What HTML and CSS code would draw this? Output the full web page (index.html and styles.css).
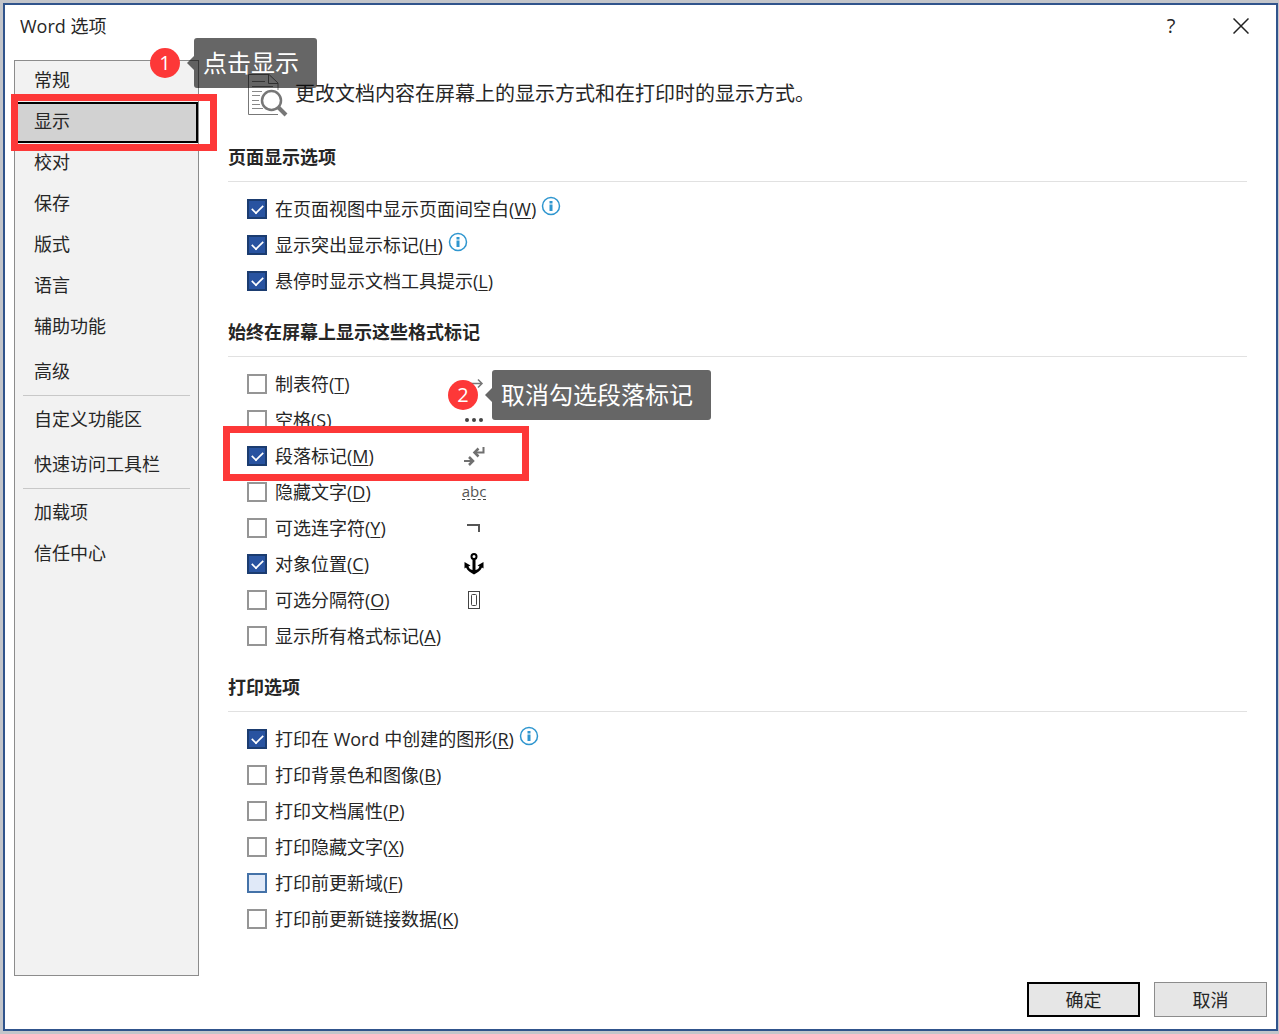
FILE: index.html
```html
<!doctype html>
<html lang="zh-CN">
<head>
    <meta charset="UTF-8">
    <title>Word 选项</title>
    <link rel="stylesheet" href="styles.css">
</head>
<body>
    <div class="dialog">
        <header class="titlebar">
            <h1>Word 选项</h1>
            <button type="button" class="help" aria-label="帮助">?</button>
            <button type="button" class="close" aria-label="关闭">
                <svg width="16" height="16" viewBox="0 0 16 16"><path d="M0.5 0.5L15.5 15.5M15.5 0.5L0.5 15.5"/></svg>
            </button>
        </header>

        <div class="main">
            <nav>
                <ul>
                    <li><a href="#">常规</a></li>
                    <li class="active">
                        <a href="#">显示</a>
                        <div class="mark mark-nav"></div>
                        <div class="callout callout-nav"><span class="badge">1</span><span class="tip">点击显示</span></div>
                    </li>
                    <li><a href="#">校对</a></li>
                    <li><a href="#">保存</a></li>
                    <li><a href="#">版式</a></li>
                    <li><a href="#">语言</a></li>
                    <li><a href="#">辅助功能</a></li>
                    <li class="spaced"><a href="#">高级</a></li>
                    <li class="group"><a href="#">自定义功能区</a></li>
                    <li class="spaced"><a href="#">快速访问工具栏</a></li>
                    <li class="group"><a href="#">加载项</a></li>
                    <li><a href="#">信任中心</a></li>
                </ul>
            </nav>

            <div class="content">
                <div class="intro">
                    <svg width="42" height="44" viewBox="0 0 42 44" fill="none">
                        <path d="M31 40.5H1.5V0.5H22L31 9V16M21.5 0.5V9.5H31" stroke="#777"/>
                        <path d="M5 7.5H18M5 12.5H26M5 17.5H15M5 21.5H13M5 26.5H12M5 30.5H13M5 34.5H16" stroke="#888"/>
                        <circle cx="24.500" cy="26.500" r="9.500" fill="#fff" stroke="#777" stroke-width="2.500"/>
                        <path d="M31 33L39 41" stroke="#777" stroke-width="4"/>
                    </svg>
                    <p>更改文档内容在屏幕上的显示方式和在打印时的显示方式。</p>
                </div>

                <section>
                    <h2>页面显示选项</h2>
                    <ul class="options">
                        <li>
                            <label><input type="checkbox" checked>在页面视图中显示页面间空白(<u>W</u>)</label>
                            <svg class="info" width="20" height="20" viewBox="0 0 20 20"><circle cx="10" cy="10" r="8.500"/><path d="M10 8.500V15M10 5V7.500"/></svg>
                        </li>
                        <li>
                            <label><input type="checkbox" checked>显示突出显示标记(<u>H</u>)</label>
                            <svg class="info" width="20" height="20" viewBox="0 0 20 20"><circle cx="10" cy="10" r="8.500"/><path d="M10 8.500V15M10 5V7.500"/></svg>
                        </li>
                        <li><label><input type="checkbox" checked>悬停时显示文档工具提示(<u>L</u>)</label></li>
                    </ul>
                </section>

                <section>
                    <h2>始终在屏幕上显示这些格式标记</h2>
                    <ul class="options marks">
                        <li>
                            <label><input type="checkbox">制表符(<u>T</u>)</label>
                            <svg width="26" height="24" viewBox="0 0 26 24" fill="none" stroke="#777" stroke-width="1.500"><path d="M4 11.500H21M17 7.500L21 11.500L17 15.500"/></svg>
                        </li>
                        <li>
                            <label><input type="checkbox">空格(<u>S</u>)</label>
                            <svg width="26" height="24" viewBox="0 0 26 24" fill="#444"><circle cx="6" cy="12" r="2"/><circle cx="13" cy="12" r="2"/><circle cx="20" cy="12" r="2"/></svg>
                        </li>
                        <li>
                            <label><input type="checkbox" checked>段落标记(<u>M</u>)</label>
                            <svg width="26" height="24" viewBox="0 0 26 24" fill="none" stroke="#707070" stroke-width="2"><path d="M3 17H12M22.500 3V8.500H13.500"/><path d="M8 13L12 17L8 21M17.500 4.500L13.500 8.500L17.500 12.500" stroke-width="2.500"/></svg>
                            <div class="mark mark-option"></div>
                            <div class="callout callout-option"><span class="badge">2</span><span class="tip">取消勾选段落标记</span></div>
                        </li>
                        <li>
                            <label><input type="checkbox">隐藏文字(<u>D</u>)</label>
                            <span class="abc">abc</span>
                        </li>
                        <li>
                            <label><input type="checkbox">可选连字符(<u>Y</u>)</label>
                            <svg width="26" height="24" viewBox="0 0 26 24" fill="none" stroke="#555" stroke-width="2"><path d="M6 9H18V16"/></svg>
                        </li>
                        <li>
                            <label><input type="checkbox" checked>对象位置(<u>C</u>)</label>
                            <svg width="26" height="24" viewBox="0 0 26 24">
                                <circle cx="13" cy="4.500" r="2.500" fill="none" stroke="#000" stroke-width="2"/>
                                <path d="M11.500 7H14.500V18C17 17.500 18 16 18.500 14.500L16.500 13.500L22.500 10V16.500L21 15.500C19.500 19 16.500 20.500 13 22.500C9.500 20.500 6.500 19 5 15.500L3.500 16.500V10L9.500 13.500L7.500 14.500C8 16 9 17.500 11.500 18Z"/>
                            </svg>
                        </li>
                        <li>
                            <label><input type="checkbox">可选分隔符(<u>O</u>)</label>
                            <svg width="26" height="24" viewBox="0 0 26 24" fill="none" stroke="#444"><rect x="7.500" y="3.500" width="11" height="17"/><rect x="10.500" y="6.500" width="5" height="11" rx="1"/></svg>
                        </li>
                        <li><label><input type="checkbox">显示所有格式标记(<u>A</u>)</label></li>
                    </ul>
                </section>

                <section>
                    <h2>打印选项</h2>
                    <ul class="options">
                        <li>
                            <label><input type="checkbox" checked>打印在 Word 中创建的图形(<u>R</u>)</label>
                            <svg class="info" width="20" height="20" viewBox="0 0 20 20"><circle cx="10" cy="10" r="8.500"/><path d="M10 8.500V15M10 5V7.500"/></svg>
                        </li>
                        <li><label><input type="checkbox">打印背景色和图像(<u>B</u>)</label></li>
                        <li><label><input type="checkbox">打印文档属性(<u>P</u>)</label></li>
                        <li><label><input type="checkbox">打印隐藏文字(<u>X</u>)</label></li>
                        <li><label><input type="checkbox" class="hover">打印前更新域(<u>F</u>)</label></li>
                        <li><label><input type="checkbox">打印前更新链接数据(<u>K</u>)</label></li>
                    </ul>
                </section>
            </div>
        </div>

        <footer>
            <button type="button" class="btn default">确定</button>
            <button type="button" class="btn">取消</button>
        </footer>
    </div>
</body>
</html>
```
FILE: styles.css
```css
* {
    box-sizing: border-box;
}

body {
    margin: 0;
    padding: 3px 1px 3px 3px;
    min-height: 100vh;
    display: flex;
    background-color: #c3c5ca;
    color: #262626;
    font-family: "Open Sans", "Noto Sans CJK SC", sans-serif;
    font-size: 18px;
    line-height: 24px;
}

ul {
    list-style: none;
    margin: 0;
    padding: 0;
}

button {
    font: inherit;
    color: inherit;
}

.dialog {
    flex: 1;
    display: flex;
    flex-direction: column;
    border: 2px solid #30548c;
    background-color: #fff;
}

/* title bar */
.titlebar {
    display: flex;
    align-items: center;
    height: 55px;
    padding: 0 21px 14px 15px;
}

.titlebar h1 {
    flex: 1;
    margin: 0;
    font-size: 18px;
    font-weight: 400;
}

.titlebar button {
    display: flex;
    align-items: center;
    justify-content: center;
    width: 28px;
    height: 28px;
    padding: 0;
    border: 0;
    background: none;
}

.titlebar .help {
    margin-right: 42px;
    font-size: 20px;
}

.titlebar svg {
    stroke: #222;
    stroke-width: 1.5;
}

.main {
    flex: 1;
    display: flex;
    padding: 0 29px 0 9px;
}

/* category list */
nav {
    width: 185px;
    border: 1px solid #8c8c8c;
    background-color: #f2f2f2;
}

nav li {
    position: relative;
}

nav a {
    display: flex;
    align-items: center;
    height: 41px;
    padding: 0 19px 3px;
    color: inherit;
    text-decoration: none;
}

nav .spaced {
    margin-top: 4px;
}

nav .group {
    margin-top: 2px;
}

nav .group::before {
    content: "";
    display: block;
    height: 1px;
    margin: 0 8px 4px;
    background-color: #c8c8c8;
}

nav .active a {
    padding: 0 17px 3px;
    border: 2px solid #000;
    background-color: #d2d2d2;
}

/* options */
.content {
    flex: 1;
    padding-left: 29px;
}

.intro {
    display: flex;
    gap: 6px;
    height: 85px;
    padding: 14px 0 0 19px;
}

.intro p {
    margin: 8px 0 0;
    font-size: 20px;
}

section {
    margin-bottom: 21px;
}

h2 {
    margin: 0;
    padding-bottom: 12px;
    border-bottom: 1px solid #e1e1e1;
    font-size: 18px;
    line-height: 24px;
}

.options {
    padding: 9px 0 0 19px;
}

.options li {
    position: relative;
    display: flex;
    align-items: center;
    height: 36px;
}

.options label {
    display: flex;
    align-items: center;
}

.marks label {
    width: 214px;
}

.options u {
    text-decoration-thickness: 1px;
    text-underline-offset: 2px;
}

input[type="checkbox"] {
    appearance: none;
    flex: none;
    display: grid;
    place-items: center;
    width: 20px;
    height: 20px;
    margin: 0 8px 0 0;
    border: 2px solid #959595;
    background-color: #fff;
}

input[type="checkbox"]:checked {
    border-color: #1b3c70;
    background-color: #2853a0;
}

input[type="checkbox"]:checked::before {
    content: "";
    width: 11px;
    height: 6px;
    margin-bottom: 3px;
    border: solid #fff;
    border-width: 0 0 2px 2px;
    transform: rotate(-45deg) scale(0.85);
}

input[type="checkbox"].hover {
    border-color: #4472a8;
    background-color: #e0e9f8;
}

.info {
    margin: 0 0 6px 5px;
    fill: none;
    stroke: #2f96cf;
    stroke-width: 1.5;
}

.info path {
    stroke-width: 3;
}

.abc {
    width: 24px;
    margin: 0 0 2px 1px;
    border-bottom: 1px dashed #444;
    color: #555;
    font-size: 15px;
    line-height: 16px;
    display: flex;
    justify-content: center;
}

/* numbered steps on top of the dialog */
.mark {
    position: absolute;
    z-index: 1;
    border: 7px solid #fd3838;
    pointer-events: none;
}

.mark-nav {
    top: -8px;
    left: -4px;
    width: 206px;
    height: 57px;
}

.mark-option {
    top: -12px;
    left: -24px;
    width: 306px;
    height: 55px;
}

.callout {
    position: absolute;
    z-index: 2;
    display: flex;
    align-items: center;
    gap: 14px;
    white-space: nowrap;
}

.callout-nav {
    top: -64px;
    left: 135px;
}

.callout-option {
    top: -68px;
    left: 201px;
}

.badge {
    width: 30px;
    height: 30px;
    border-radius: 50%;
    background-color: #fd3838;
    color: #fff;
    font-size: 20px;
    line-height: 30px;
    text-align: center;
}

.tip {
    position: relative;
    padding: 0 18px 0 9px;
    border-radius: 3px;
    background-color: rgba(0, 0, 0, 0.6);
    color: #fff;
    font-size: 24px;
    line-height: 50px;
}

.tip::before {
    content: "";
    position: absolute;
    top: 18px;
    right: 100%;
    border: 7px solid transparent;
    border-left: 0;
    border-right-color: rgba(0, 0, 0, 0.6);
}

footer {
    display: flex;
    justify-content: flex-end;
    gap: 14px;
    padding: 6px 9px 12px;
}

.btn {
    width: 113px;
    height: 35px;
    padding: 0;
    border: 1px solid #8c8c8c;
    background-color: #e6e6e6;
}

.btn.default {
    border: 2px solid #000;
}
```
